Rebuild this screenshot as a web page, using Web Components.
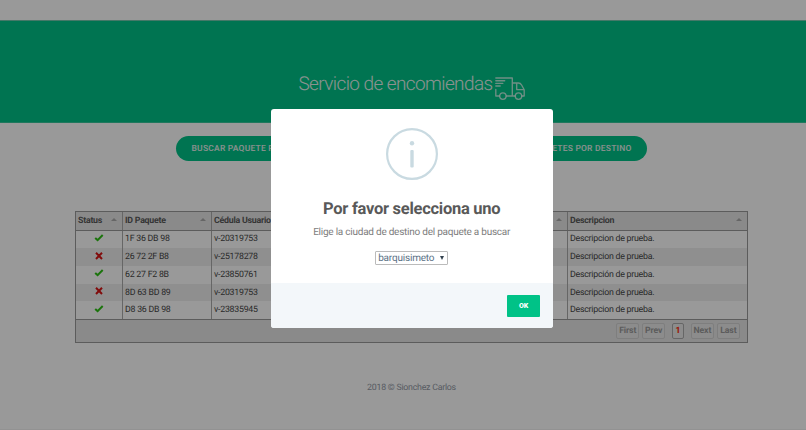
<!DOCTYPE html>
<html lang="es"><head><meta charset="utf-8"><title>Servicio de encomiendas</title>
<style>html,body{margin:0;height:100%;overflow:hidden;background:#fff;font-family:Roboto,"Liberation Sans",sans-serif;text-rendering:geometricPrecision}</style></head>
<body><parcel-app></parcel-app>
<script>
const define = (name, html) => customElements.define(name, class extends HTMLElement {
  constructor() {
    super();
    const t = document.createElement('template');
    t.innerHTML = html;
    this.attachShadow({mode: 'open'}).append(t.content.cloneNode(true));
  }
});

define('delivery-truck', `<style>:host{display:block;width:30px;height:23px}svg{display:block}</style>
<svg width="30" height="23" viewBox="0 0 30 23" fill="none" stroke="#fff" stroke-opacity=".72" stroke-width="1.35" stroke-linejoin="round" stroke-linecap="round">
<path d="M.8 1H17.3V19H11.5M.8 3.7H9.7M.8 6.4H7.8M.8 9H5.2M.8 12.5V19H4.3M17.3 6H23.4Q25.5 6 26.6 8L29.2 12.8V19H27M17.3 19H20M21.7 6V12.6H29"/>
<circle cx="7.9" cy="19.1" r="3.2"/><circle cx="23.5" cy="19.1" r="3.2"/></svg>`);

define('page-banner', `<style>:host{display:flex;box-sizing:border-box;height:103px;padding:51px 0 0 17px;justify-content:center;align-items:flex-start;background:#00c287;border-top:1px solid #75c9ae;border-bottom:1px solid #35c99c;color:#e8f4f0;font-size:19px;letter-spacing:-.6px;font-weight:300;line-height:24px}
delivery-truck{margin:4.5px 0 0 2px}</style><slot></slot><delivery-truck></delivery-truck>`);

define('pill-button', `<style>:host{display:block;box-sizing:border-box;height:25px;border-radius:13px;padding:0 15.5px;background:#00c287;color:#deeee8;font-size:8.5px;font-weight:600;line-height:26px;letter-spacing:.2px;white-space:nowrap}</style><slot></slot>`);

define('status-mark', `<style>:host{display:block;width:10px;height:10px}svg{display:none}:host([kind=ok]) .ok,:host([kind=no]) .no{display:block}</style>
<svg class="ok" width="10" height="10" viewBox="0 0 10 10"><path d="M1.2 4.9L3.6 7.1L8.7 2" fill="none" stroke="#2dc214" stroke-width="2"/></svg>
<svg class="no" width="10" height="10" viewBox="0 0 10 10"><path d="M2 1.7L8 8M8 1.7L2 8" fill="none" stroke="#d81414" stroke-width="2"/></svg>`);

define('head-cell', `<style>:host{display:flex;box-sizing:border-box;align-items:center;justify-content:space-between;padding:0 5px 0 2px;border-right:1px solid #aaa;font-size:8.8px;letter-spacing:-.24px;font-weight:700;color:#5a5a5a;white-space:nowrap}
:host(:last-child){border-right:0}i{border:3px solid transparent;border-top:0;border-bottom:3px solid #aaa;margin-top:-2px}span{padding-top:1px}</style><span><slot></slot></span><i></i>`);

define('body-cell', `<style>:host{display:flex;box-sizing:border-box;align-items:center;padding:.3px 2px 0;border-right:1px solid #aaa;font-size:8.8px;letter-spacing:-.25px;color:#484848;white-space:nowrap}
:host(:last-child){border-right:0}:host([mark]){justify-content:center;padding:0 0 3px 0}</style><slot></slot>`);

define('table-row', `<style>:host{display:grid;grid-template-columns:47px 89px 89px 89px 89px 89px 1fr;height:17.7px}
:host([head]){height:18.5px;background:#e6e6e6;border-bottom:1px solid #999;box-sizing:border-box}:host([odd]){background:#efefef}</style><slot></slot>`);

define('page-key', `<style>:host{display:block;box-sizing:border-box;width:23.3px;height:16px;text-align:center;border:1px solid #d2d2d2;border-radius:2px;background:#e9e9e9;font-size:8.7px;letter-spacing:-.1px;font-weight:700;line-height:14.5px;color:#999}
:host([current]){width:12px;margin:0 4px;border-color:#aaa;color:#ff2200}</style><slot></slot>`);

define('table-pager', `<style>:host{display:flex;box-sizing:border-box;height:23px;padding:3px 7px 0 0;justify-content:flex-end;gap:2.7px;border-top:1px solid #999;background:#e6e6e6}</style>
<page-key>First</page-key><page-key>Prev</page-key><page-key current>1</page-key><page-key>Next</page-key><page-key>Last</page-key>`);

const rows = [['ok','1F 36 DB 98','v-20319753','Descripcion de prueba.'],['no','26 72 2F B8','v-25178278','Descripcion de prueba.'],['ok','62 27 F2 8B','v-23850761','Descripción de prueba.'],['no','8D 63 BD 89','v-20319753','Descripcion de prueba.'],['ok','D8 36 DB 98','v-23835945','Descripcion de prueba.']];
define('parcel-table', `<style>:host{display:block;box-sizing:border-box;width:673px;height:132px;border:1px solid #999;background:#fff}</style>
<table-row head><head-cell>Status</head-cell><head-cell>ID Paquete</head-cell><head-cell>Cédula Usuario</head-cell><head-cell></head-cell><head-cell></head-cell><head-cell></head-cell><head-cell>Descripcion</head-cell></table-row>
${rows.map((r,i)=>`<table-row ${i%2?'odd':''}><body-cell mark><status-mark kind="${r[0]}"></status-mark></body-cell><body-cell>${r[1]}</body-cell><body-cell>${r[2]}</body-cell><body-cell></body-cell><body-cell></body-cell><body-cell></body-cell><body-cell>${r[3]}</body-cell></table-row>`).join('')}<table-pager></table-pager>`);

define('city-select', `<style>:host{display:flex;box-sizing:border-box;width:73px;height:14px;padding:0 3px 0 2px;align-items:center;justify-content:space-between;border:1px solid #bbb;border-radius:1px;color:#5c7286;font-size:10px;letter-spacing:-.2px;line-height:12px}span{padding-top:1px}i{border:2px solid transparent;border-top:4px solid #33424f;border-bottom:0}</style><span><slot></slot></span><i></i>`);

define('info-icon', `<style>:host{display:block;width:52px;height:52px}svg{display:block}</style>
<svg width="52" height="52" viewBox="0 0 52 52" fill="#c9dae1"><circle cx="26" cy="26" r="24.9" fill="none" stroke="#c9dae1" stroke-width="2.2"/><circle cx="26" cy="15.2" r="2.2"/><rect x="24.3" y="22" width="3.4" height="17.5" rx="1"/></svg>`);

define('choice-dialog', `<style>:host{display:flex;flex-direction:column;box-sizing:border-box;width:282px;height:219px;border-radius:3px;overflow:hidden;background:#fff}
main{flex:1;display:flex;flex-direction:column;align-items:center;padding-top:18.5px}
h2{margin:19px 0 0;font-size:16.5px;letter-spacing:-.27px;line-height:22px;font-weight:700;color:#595959}
p{margin:5px 0 12.5px;font-size:10px;letter-spacing:-.24px;line-height:13px;color:#7d7d7d}
footer{display:flex;box-sizing:border-box;height:45px;padding:12px 12.5px 0;justify-content:flex-end;background:#f3f7fa}
button{width:33px;height:22px;border:0;border-radius:1px;padding:0;background:#00c287;color:#fff;font:900 7px Roboto,sans-serif}</style>
<main><info-icon></info-icon><h2>Por favor selecciona uno</h2><p>Elige la ciudad de destino del paquete a buscar</p><city-select>barquisimeto</city-select></main><footer><button>OK</button></footer>`);

define('parcel-app', `<style>:host{display:block;position:relative;height:430px;box-sizing:border-box;padding-top:20px;border-bottom:1px solid #929292;overflow:hidden}
nav{display:flex;justify-content:space-between;width:471px;margin:13px 0 0 176px}parcel-table{margin:50px 0 0 75px}
small{display:block;margin:37px 0 0 17px;text-align:center;font-size:8.8px;letter-spacing:-.24px;line-height:16px;color:#9299a5}
.veil{position:absolute;inset:0;background:rgba(0,0,0,.4)}choice-dialog{position:absolute;left:270.7px;top:109px}</style>
<page-banner>Servicio de encomiendas</page-banner><nav><pill-button>BUSCAR PAQUETE POR ID</pill-button><pill-button>BUSCAR PAQUETES POR DESTINO</pill-button></nav>
<parcel-table></parcel-table><small>2018 © Sionchez Carlos</small><div class="veil"></div><choice-dialog></choice-dialog>`);
</script></body></html>
